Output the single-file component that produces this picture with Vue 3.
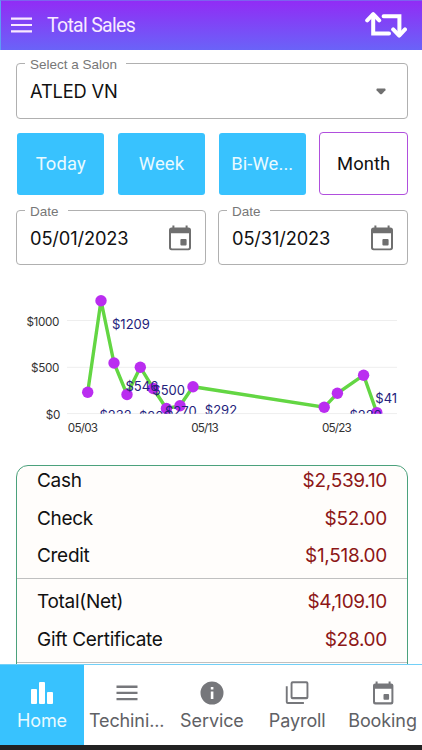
<template>
  <div class="page">
    <!-- top bar -->
    <header class="topbar">
      <svg class="menu" width="21" height="16" viewBox="0 0 21 16">
        <path d="M0 1.6h21M0 8h21M0 14.4h21" stroke="#fae9ff" stroke-width="2.2" />
      </svg>
      <h1 class="title">Total Sales</h1>
      <svg class="swap" width="42" height="28" viewBox="0 0 42 28">
        <g fill="none" stroke="#fff" stroke-width="4" stroke-linecap="round" stroke-linejoin="round">
          <path d="M2.2 9.4 8.2 3.2l6 6.2" />
          <path d="M8.2 4v18.6H24" stroke-linejoin="miter" />
          <path d="M18.6 5.2h15.8V23" stroke-linejoin="miter" />
          <path d="M28.2 18.4l6 6.2 5.8-6.2" />
        </g>
      </svg>
    </header>

    <main class="content">
      <!-- salon select -->
      <div class="field salon">
        <label class="label">Select a Salon</label>
        <span class="value">ATLED VN</span>
        <svg class="arrow" width="10" height="7" viewBox="0 0 10 7">
          <path d="M1 .5h8q1 .8.4 1.7L6.2 5.8Q5 6.8 3.8 5.8L.6 2.2Q0 1.3 1 .5z" fill="#707070" />
        </svg>
      </div>

      <!-- period buttons -->
      <div class="periods">
        <button
          v-for="p in periods"
          :key="p"
          :class="['period', { active: p === current }]"
          @click="current = p"
        >{{ p }}</button>
      </div>

      <!-- date range -->
      <div class="dates">
        <div v-for="d in dates" :key="d" class="field">
          <label class="label">Date</label>
          <span class="value">{{ d }}</span>
          <svg class="calendar" width="24" height="26" viewBox="0 0 24 26">
            <path :d="calendarPath" fill="#6f6f6f" fill-rule="evenodd" />
          </svg>
        </div>
      </div>

      <!-- sales chart -->
      <svg class="chart" width="422" height="160" viewBox="0 285 422 160">
        <defs>
          <clipPath id="plot"><rect x="67" y="285" width="330" height="128.8" /></clipPath>
        </defs>
        <path d="M67 320.5h330M67 367.3h330M67 413.6h330" stroke="#eee" />
        <g class="axis" text-anchor="end">
          <text x="59" y="325.6">$1000</text>
          <text x="59" y="372.4">$500</text>
          <text x="60" y="419">$0</text>
        </g>
        <g class="axis day" text-anchor="middle">
          <text x="82.5" y="432.4">05/03</text>
          <text x="204.5" y="432.4">05/13</text>
          <text x="336.5" y="432.4">05/23</text>
        </g>
        <g clip-path="url(#plot)">
          <polyline :points="line" fill="none" stroke="#63d643" stroke-width="3.4" />
          <circle v-for="(p, i) in points" :key="i" :cx="p[0]" :cy="p[1]" r="5.7" fill="#ba2df0" />
          <text v-for="(l, i) in labels" :key="i" class="amount" :x="l.x" :y="l.y">{{ l.text }}</text>
        </g>
      </svg>

      <!-- totals -->
      <section class="card">
        <div v-for="(group, i) in totals" :key="i" class="group">
          <div v-for="row in group" :key="row.name" class="row">
            <span>{{ row.name }}</span>
            <span class="money">{{ row.value }}</span>
          </div>
        </div>
      </section>
    </main>

    <!-- bottom tabs -->
    <nav class="tabs">
      <a v-for="t in tabs" :key="t.name" :class="['tab', { on: t.name === 'Home' }]">
        <svg width="24" height="26" viewBox="0 0 24 26">
          <path :d="t.icon" fill="currentColor" fill-rule="evenodd" />
        </svg>
        <span>{{ t.name }}</span>
      </a>
    </nav>
    <div class="bottom"></div>
  </div>
</template>

<script setup>
import { ref, computed } from 'vue'

const periods = ['Today', 'Week', 'Bi-We...', 'Month']
const current = ref('Month')
const dates = ['05/01/2023', '05/31/2023']

const calendarPath =
  'M4.4 .4h2v2.2h11.2V.4h2v2.2h.8q2.6 0 2.6 2.6v17.4q0 2.6-2.6 2.6H3.6Q1 25.2 1 22.6V5.2q0-2.6 2.6-2.6h.8zM3 8.2v14.4q0 .8.8.8h16.4q.8 0 .8-.8V8.2zM13.4 14h4.2q1 0 1 1v4.6q0 1-1 1h-4.2q-1 0-1-1V15q0-1 1-1z'

// chart points
const points = [
  [87.7, 392.3], [101, 300.7], [114, 363], [127, 394.5], [140.3, 367.2],
  [153.3, 388.5], [166.4, 408.5], [180, 405.8], [193, 386.7],
  [324.2, 407.3], [337.4, 393.3], [363.6, 375.2], [376.8, 412.6]
]
const line = computed(() => points.map(p => p.join(',')).join(' '))

const labels = [
  { text: '$232', x: 99.5, y: 419.5 },
  { text: '$1209', x: 112, y: 328.5 },
  { text: '$546', x: 125.5, y: 390.5 },
  { text: '$209', x: 139, y: 421.3 },
  { text: '$500', x: 152.3, y: 395.2 },
  { text: '$270', x: 165, y: 415.8 },
  { text: '$292', x: 204.8, y: 414.5 },
  { text: '$220', x: 349.4, y: 419.6 },
  { text: '$414', x: 375.3, y: 402.8 }
]

const totals = [
  [
    { name: 'Cash', value: '$2,539.10' },
    { name: 'Check', value: '$52.00' },
    { name: 'Credit', value: '$1,518.00' }
  ],
  [
    { name: 'Total(Net)', value: '$4,109.10' },
    { name: 'Gift Certificate', value: '$28.00' }
  ],
  []
]

const tabs = [
  { name: 'Home', icon: 'M2 9h4q1 0 1 1v13q0 1-1 1H2q-1 0-1-1V10q0-1 1-1zM10 2h4q1 0 1 1v20q0 1-1 1h-4q-1 0-1-1V3q0-1 1-1zM18 12h4q1 0 1 1v10q0 1-1 1h-4q-1 0-1-1V13q0-1 1-1z' },
  { name: 'Techini...', icon: 'M1.5 5.6h21v2.3h-21zM1.5 11.8h21v2.3h-21zM1.5 18h21v2.3h-21z' },
  { name: 'Service', icon: 'M12 1.5a11.5 11.5 0 1 1 0 23a11.5 11.5 0 1 1 0-23zM10.8 7h2.6v2.5h-2.6zM10.8 11.5h2.6v7.5h-2.6z' },
  { name: 'Payroll', icon: 'M7.6 1.2h13.8q2 0 2 2v14q0 2-2 2H7.6q-2 0-2-2v-14q0-2 2-2zM8 3.3q-.5 0-.5.5v12.8q0 .5.5.5h13q.5 0 .5-.5V3.8q0-.5-.5-.5zM.8 6.3h1.9v15.8h16.2V24H2.8q-2 0-2-2z' },
  { name: 'Booking', icon: 'M4.6 1.4h2v2h11v-2h2v2h.6q2.2 0 2.2 2.2v16.6q0 2.2-2.2 2.2H4.2Q2 24.4 2 22.2V5.6q0-2.2 2.2-2.2h.4zM4 8.8v12.8q0 .7.7.7h15q.7 0 .7-.7V8.8zM13.4 14h3.8q.9 0 .9.9v3.9q0 .9-.9.9h-3.8q-.9 0-.9-.9v-3.9q0-.9.9-.9z' }
]
</script>

<style>
body {
  background: #fff;
}
</style>

<style scoped>
.page {
  width: 422px;
  height: 750px;
  display: flex;
  flex-direction: column;
  overflow: hidden;
  background: #fff;
  font-family: Inter, "Liberation Sans", sans-serif;
  color: #111;
}
.page * {
  box-sizing: border-box;
}
/* top bar */
.topbar {
  flex: none;
  height: 50px;
  display: flex;
  align-items: center;
  padding: 0 15px 2px 10px;
  background: linear-gradient(#912cf5, #6a63f8);
  border-top: 1px solid #7c62ee;
  border-left: 1px solid #5d9cf4;
}
.title {
  flex: 1;
  margin: 1px 0 0 15px;
  font: 400 19.5px Roboto, sans-serif;
  letter-spacing: -0.7px;
  color: #f8eaff;
}
.content {
  flex: 1;
  min-height: 0;
  overflow: hidden;
}
/* outlined fields */
.field {
  position: relative;
  display: flex;
  align-items: center;
  justify-content: space-between;
  height: 55px;
  padding: 0 13px;
  border: 1px solid #b0b0b0;
  border-radius: 4px;
}
.salon {
  margin: 13px 14px 0 16px;
  height: 56px;
  padding-right: 21px;
}
.label {
  position: absolute;
  left: 8px;
  top: -8px;
  padding: 0 9px 0 5px;
  background: #fff;
  font: 13.5px/17px "Liberation Sans", Arial, sans-serif;
  color: #777;
}
.value {
  font-size: 18.3px;
  letter-spacing: -0.15px;
}
/* period buttons */
.periods {
  display: grid;
  grid-template-columns: 87.4px 87.4px 87.4px 1fr;
  align-items: center;
  gap: 13.4px;
  height: 63px;
  margin: 13px 14px 0 17px;
}
.period {
  height: 62px;
  padding: 0;
  border: 0;
  border-radius: 3px;
  background: #38c2fe;
  color: #e9faff;
  font: 400 18.4px Roboto, sans-serif;
  letter-spacing: 0.1px;
}
.period.active {
  height: 63px;
  border: 1px solid #b04fdd;
  border-radius: 4px;
  background: #fff;
  color: #111;
}
.dates {
  display: flex;
  gap: 12px;
  margin: 15px 14px 0 16px;
}
.dates .field {
  flex: 1;
}
.chart {
  display: block;
  margin-top: 20px;
}
.axis {
  font-size: 11.7px;
  letter-spacing: -0.35px;
  fill: #333;
}
.day {
  letter-spacing: -0.8px;
}
.amount {
  font-size: 13px;
  fill: #24217c;
}
/* totals */
.card {
  height: 230px;
  margin: 20px 14px 0 16px;
  border: 1px solid #4ba17c;
  border-radius: 12px;
  background: #fffdfb;
}
.group {
  padding: 4px 20px 3.5px;
  border-bottom: 1px solid #c0c0c0;
}
.group:first-child {
  padding-top: 0;
  margin-top: -4px;
}
.row {
  display: flex;
  justify-content: space-between;
  height: 37.5px;
  line-height: 37.5px;
  font-size: 19px;
  letter-spacing: -0.3px;
}
.money {
  color: #8d1717;
}
/* bottom tabs */
.tabs {
  flex: none;
  height: 81px;
  display: flex;
  border-top: 1px solid #72d0f8;
}
.tab {
  flex: none;
  width: 85.3px;
  display: flex;
  flex-direction: column;
  align-items: center;
  padding-top: 15px;
  color: #76777b;
  white-space: nowrap;
}
.tab span {
  margin-top: 3px;
  font-size: 18px;
  letter-spacing: -0.1px;
  line-height: 24px;
  color: #606165;
}
.tab.on {
  width: 84px;
  background: #38c2fe;
  color: #fff;
}
.tab.on span {
  color: #e8faff;
}
.bottom {
  flex: none;
  height: 5px;
  background: #222;
}
</style>
